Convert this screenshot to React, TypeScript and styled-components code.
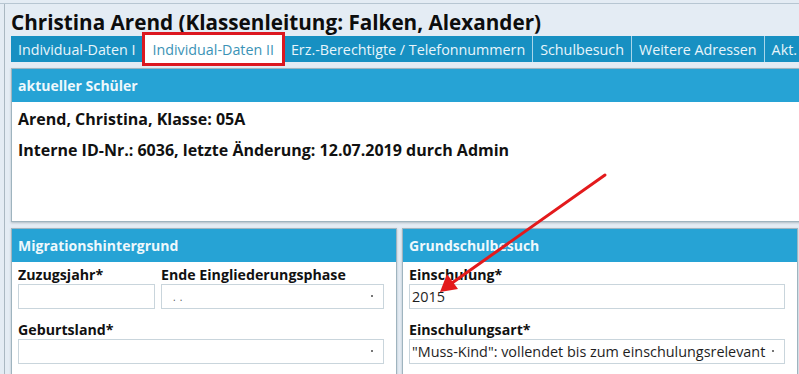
import styled, { createGlobalStyle } from 'styled-components'

const GlobalStyle = createGlobalStyle`
  html, body {
    margin: 0;
    padding: 0;
    background: #e4ecf4;
    overflow: hidden;
  }
  body {
    font-family: 'Open Sans', 'Noto Sans', sans-serif;
    color: #111;
  }
`

const tabs = [
  'Individual-Daten I',
  'Individual-Daten II',
  'Erz.-Berechtigte / Telefonnummern',
  'Schulbesuch',
  'Weitere Adressen',
  'Akt.'
]

const Window = styled.div`
  position: relative;
  width: 799px;
  height: 371px;
  box-sizing: border-box;
  border-top: 1px solid #b7c6d2;
  margin-top: 3px;
  overflow: hidden;
`

const Frame = styled.div`
  margin-left: 4px;
  border-left: 1px solid #aab8c2;
  height: 100%;
  padding-left: 6px;
`

const Title = styled.h1`
  box-sizing: border-box;
  margin: 0;
  padding-top: 5px;
  height: 32px;
  font-size: 20.7px;
  font-weight: 700;
  line-height: 26px;
  color: #0d0d0d;
  white-space: nowrap;
`

const TabBar = styled.div`
  display: flex;
  align-items: stretch;
  height: 26px;
  background: #1790c2;
  margin-right: -20px;
`

const Tab = styled.div<{ $active?: boolean }>`
  position: relative;
  display: flex;
  align-items: center;
  padding: 0 7px;
  font-size: 14.3px;
  white-space: nowrap;
  color: ${({ $active }) => ($active ? '#3b93b6' : '#e8f5fb')};
  background: ${({ $active }) => ($active ? '#fff' : 'transparent')};
  border-right: 1px solid ${({ $active }) => ($active ? 'transparent' : '#a9d6ea')};
  outline: ${({ $active }) => ($active ? '3px solid #dc1820' : 'none')};
  margin: ${({ $active }) => ($active ? '-1px 2px -1px 2px' : '0')};
  z-index: ${({ $active }) => ($active ? 1 : 0)};
`

const Content = styled.div`
  padding-top: 6px;
  display: grid;
  gap: 6px;
`

const Card = styled.section<{ $bleed?: boolean }>`
  background: #fff;
  border: 1px solid #9fb4bf;
  box-shadow: 0 1px 2px rgba(80, 100, 110, 0.35);
  margin-right: ${({ $bleed }) => ($bleed ? '-20px' : '0')};
  display: flex;
  flex-direction: column;
`

const CardHeader = styled.div`
  height: 33px;
  display: flex;
  align-items: center;
  padding-left: 6px;
  background: #26a3d5;
  color: #eef8fc;
  font-size: 14px;
  font-weight: 700;
`

const InfoBody = styled.div`
  height: 113px;
  padding: 6px 6px 0;
  display: grid;
  align-content: start;
  gap: 8px;
`

const InfoLine = styled.div`
  font-size: 16px;
  font-weight: 700;
  line-height: 23px;
  color: #111;
`

const Columns = styled.div`
  display: grid;
  grid-template-columns: 386px 396px;
  gap: 5px;
`

const FormBody = styled.div`
  padding: 3px 12px 10px 6px;
  display: grid;
`

const FieldRow = styled.div<{ $cols?: string }>`
  display: grid;
  grid-template-columns: ${({ $cols }) => $cols ?? '1fr'};
  gap: 6px;
  margin-bottom: 11px;
`

const Field = styled.div`
  display: flex;
  flex-direction: column;
`

const Label = styled.span`
  font-size: 14.2px;
  font-weight: 700;
  line-height: 20px;
  height: 18px;
  overflow: hidden;
  color: #111;
  margin-bottom: 1px;
  white-space: nowrap;
`

const Box = styled.div`
  position: relative;
  height: 23px;
  border: 1px solid #c9d5dc;
  background: #fff;
  display: flex;
  align-items: center;
  padding: 0 2px;
  font-size: 14.4px;
  color: #1e1e1e;
  white-space: nowrap;
  overflow: hidden;
`

const Dots = styled.span`
  margin-left: 9px;
  letter-spacing: 4px;
  font-size: 10px;
  color: #555;
`

const Caret = styled.span`
  position: absolute;
  right: 10px;
  top: 10px;
  width: 2px;
  height: 2px;
  background: #777;
`

const Arrow = styled.svg`
  position: absolute;
  left: 0;
  top: -4px;
  pointer-events: none;
`

export default function App() {
  return (
    <>
      <GlobalStyle />
      <Window>
        <Frame>
          <Title>Christina Arend (Klassenleitung: Falken, Alexander)</Title>
          <TabBar>
            {tabs.map((t, i) => (
              <Tab key={t} $active={i === 1}>
                {t}
              </Tab>
            ))}
          </TabBar>
          <Content>
            <Card $bleed>
              <CardHeader>aktueller Schüler</CardHeader>
              <InfoBody>
                <InfoLine>Arend, Christina, Klasse: 05A</InfoLine>
                <InfoLine>Interne ID-Nr.: 6036, letzte Änderung: 12.07.2019 durch Admin</InfoLine>
              </InfoBody>
            </Card>
            <Columns>
              <Card>
                <CardHeader>Migrationshintergrund</CardHeader>
                <FormBody>
                  <FieldRow $cols="137px 1fr">
                    <Field>
                      <Label>Zuzugsjahr*</Label>
                      <Box />
                    </Field>
                    <Field>
                      <Label>Ende Eingliederungsphase</Label>
                      <Box>
                        <Dots>..</Dots>
                        <Caret />
                      </Box>
                    </Field>
                  </FieldRow>
                  <FieldRow>
                    <Field>
                      <Label>Geburtsland*</Label>
                      <Box>
                        <Caret />
                      </Box>
                    </Field>
                  </FieldRow>
                </FormBody>
              </Card>
              <Card>
                <CardHeader>Grundschulbesuch</CardHeader>
                <FormBody>
                  <FieldRow>
                    <Field>
                      <Label>Einschulung*</Label>
                      <Box>2015</Box>
                    </Field>
                  </FieldRow>
                  <FieldRow>
                    <Field>
                      <Label>Einschulungsart*</Label>
                      <Box>
                        "Muss-Kind": vollendet bis zum einschulungsrelevant
                        <Caret />
                      </Box>
                    </Field>
                  </FieldRow>
                </FormBody>
              </Card>
            </Columns>
          </Content>
        </Frame>
        <Arrow width="799" height="374" viewBox="0 0 799 374">
          <line x1="605" y1="175" x2="452" y2="283" stroke="#e31a1c" strokeWidth="3" strokeLinecap="round" />
          <polygon points="440,292 447,274 458,289" fill="#e31a1c" />
        </Arrow>
      </Window>
    </>
  )
}
